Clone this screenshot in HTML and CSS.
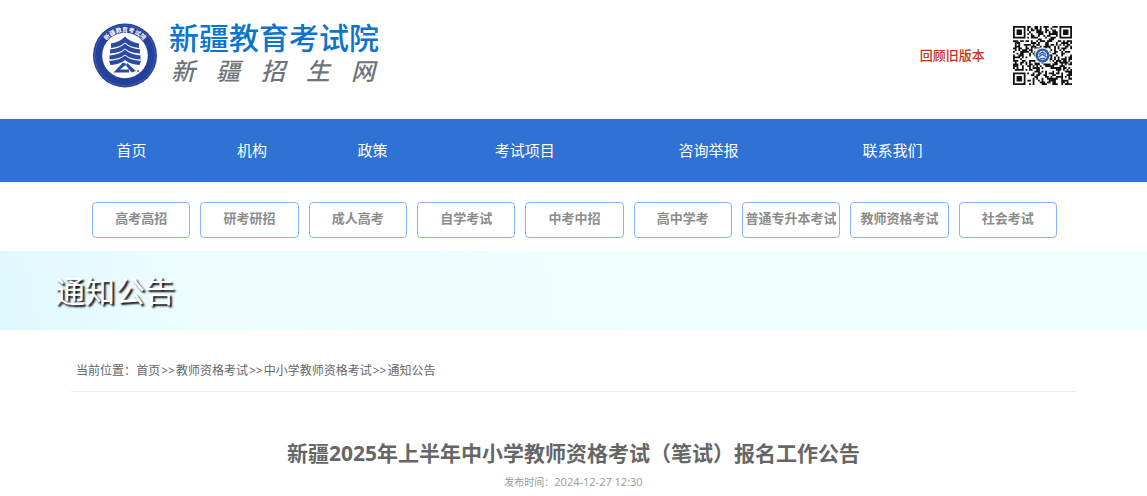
FILE: index.html
```
<!DOCTYPE html>
<html lang="zh-CN">
<head>
    <meta charset="UTF-8">
    <meta name="viewport" content="width=device-width, initial-scale=1.0">
    <title>新疆教育考试院</title>
    <link rel="stylesheet" href="styles.css">
</head>
<body>
    <header class="container header">
        <a class="logo" href="#">
            <svg class="emblem" viewBox="0 0 64 65" aria-hidden="true">
                <circle cx="32" cy="32.5" r="32" fill="#23409a"/>
                <circle cx="32" cy="32.5" r="30.2" fill="none" stroke="#5b72b8" stroke-width=".6"/>
                <circle cx="32" cy="32.5" r="22.8" fill="#fff"/>
                <path id="arc" d="M8.500 27a24.300 24.300 0 0 1 47 0" fill="none"/>
                <text class="emblem-text"><textPath href="#arc" startOffset="50%" text-anchor="middle">新疆教育考试院</textPath></text>
                <g fill="#2c4aa0">
                    <path d="M32 13.500q5 5.500 14 7v4.500q-9-1-14-5.500q-5 4.500-14 5.500v-4.500q9-1.500 14-7z"/>
                    <path d="M32 20.500q5 5 15 6v4q-10-.5-15-5q-5 4.500-15 5v-4q10-1 15-6z"/>
                    <path d="M32 26.500q5 5 15.500 6v4q-10.500-.5-15.500-5q-5 4.500-15.500 5v-4q10.500-1 15.500-6z"/>
                    <path d="M32 32.500q5 4.500 16 5.500l-1.500 4q-9.500-.5-14.500-5q-5 4.500-14.500 5l-1.500-4q11-1 16-5.500z"/>
                    <path d="M30 39.500l4 1.500l-7 5.500h9v3h-15.500z"/>
                    <path d="M34.500 40q4 4.500 8.500 8l-4.500 1.500l-5.500-7z"/>
                    <circle cx="45" cy="48" r=".9"/>
                </g>
            </svg>
            <span class="logo-text">
                <span class="logo-name">新疆教育考试院</span>
                <span class="logo-sub"><span>新</span><span>疆</span><span>招</span><span>生</span><span>网</span></span>
            </span>
        </a>
        <div class="header-right">
            <a class="old-version" href="#">回顾旧版本</a>
            <svg class="qr" viewBox="0 0 33 33" role="img" aria-label="二维码">
                <path id="qrModules" fill="#111"/>
                <rect x="12.500" y="12.500" width="8" height="8" fill="#fff"/>
                <circle cx="16.500" cy="16.500" r="3.900" fill="#2a57a5"/>
                <circle cx="16.500" cy="16.500" r="2.600" fill="#dce6f5"/>
                <path d="M14.500 16l2-1.500l2 1.500M14.300 17.300l2.200-1.500l2.200 1.500M15 18.300h3" fill="none" stroke="#2a57a5" stroke-width=".7"/>
            </svg>
        </div>
    </header>

    <nav class="main-nav">
        <ul class="container main-menu">
            <li><a href="#">首页</a></li>
            <li><a href="#">机构</a></li>
            <li><a href="#">政策</a></li>
            <li class="wide"><a href="#">考试项目</a></li>
            <li class="wide"><a href="#">咨询举报</a></li>
            <li class="wide"><a href="#">联系我们</a></li>
        </ul>
    </nav>

    <nav class="container sub-nav">
        <a href="#">高考高招</a>
        <a href="#">研考研招</a>
        <a href="#">成人高考</a>
        <a href="#">自学考试</a>
        <a href="#">中考中招</a>
        <a href="#">高中学考</a>
        <a href="#">普通专升本考试</a>
        <a href="#">教师资格考试</a>
        <a href="#">社会考试</a>
    </nav>

    <div class="banner">
        <h2>通知公告</h2>
    </div>

    <main class="container">
        <div class="breadcrumb">当前位置：<a href="#">首页</a><span>&gt;&gt;</span><a href="#">教师资格考试</a><span>&gt;&gt;</span><a href="#">中小学教师资格考试</a><span>&gt;&gt;</span><a href="#">通知公告</a></div>
        <article class="article">
            <h1>新疆2025年上半年中小学教师资格考试（笔试）报名工作公告</h1>
            <p class="date">发布时间：<time datetime="2024-12-27T12:30">2024-12-27 12:30</time></p>
        </article>
    </main>

    <script src="qr.js"></script>
</body>
</html>
```
FILE: styles.css
```
* {
    box-sizing: border-box;
}
body {
    margin: 0;
    background-color: #fff;
    color: #666;
    font-family: "Open Sans", "Noto Sans CJK SC", sans-serif;
    font-size: 12px;
}
a {
    color: inherit;
    text-decoration: none;
}
.container {
    width: 87.6%;
    margin: 0 auto;
}

/* header */
.header {
    display: flex;
    justify-content: space-between;
    height: 119px;
    padding: 20px 4px 0 22px;
}
.logo {
    display: flex;
    gap: 12px;
}
.emblem {
    width: 64px;
    height: 65px;
    margin-top: 3px;
}
.emblem-text {
    fill: #fff;
    font-size: 6px;
    font-weight: bold;
}
.logo-text {
    display: flex;
    flex-direction: column;
    font-family: "Liberation Sans", "Noto Sans CJK SC", sans-serif;
    font-weight: 500;
}
.logo-name {
    color: #0a74cf;
    font-size: 30px;
    line-height: 38px;
}
.logo-sub {
    display: flex;
    justify-content: space-between;
    padding: 0 4px 0 2px;
    color: #707478;
    font-size: 24px;
    font-style: italic;
    line-height: 28px;
}
.header-right {
    display: flex;
    align-items: flex-start;
    gap: 28px;
    padding-top: 6px;
}
.old-version {
    color: #c9301c;
    font-size: 13px;
    font-weight: 500;
    line-height: 58px;
}
.qr {
    width: 59px;
    height: 59px;
}

/* navigation */
.main-nav {
    background-color: #2f72d3;
}
.main-menu {
    display: flex;
    padding: 0;
    list-style: none;
}
.main-menu li {
    width: 12%;
    text-align: center;
}
.main-menu .wide {
    width: 18.3%;
}
.main-menu a {
    display: block;
    color: #fff;
    font-size: 15px;
    line-height: 63px;
}
.sub-nav {
    display: grid;
    grid-template-columns: repeat(9, 1fr);
    gap: 10px;
    padding: 20px 19px 13px 21px;
}
.sub-nav a {
    height: 36px;
    border: 1px solid #86b4fb;
    border-radius: 4px;
    color: #8c8c8c;
    font-size: 13px;
    font-weight: bold;
    line-height: 30px;
    text-align: center;
    white-space: nowrap;
}

/* banner */
.banner {
    padding: 0 55px;
    background: linear-gradient(80deg, #def8ff 0, #ebfcff 14%, #effeff 50%, #f0ffff 100%);
}
.banner h2 {
    margin: 0;
    color: #fff;
    font-size: 30px;
    font-weight: normal;
    line-height: 79px;
    text-shadow: 2px 2px 2px #000;
}

/* article */
.breadcrumb {
    margin-top: 20px;
    padding-left: 5px;
    border-bottom: 1px solid #e6eef5;
    line-height: 41px;
}
.breadcrumb span {
    padding: 0 1px;
}
.article {
    text-align: center;
}
.article h1 {
    margin: 46px 0 4px;
    font-size: 21px;
    line-height: 30px;
}
.date {
    margin: 0;
    color: #999;
    font-size: 10px;
    line-height: 20px;
}
.date time {
    font-size: 11px;
}
```
FILE: qr.js
```
const size = 33;
let seed = 20241;

function nextBit() {
    seed = (seed * 1103515245 + 12345) % 2147483648;
    return seed / 2147483648 < 0.52;
}

// finder squares sit in three corners with a blank edge around them
function finder(x, y) {
    const corners = [[0, 0], [size - 7, 0], [0, size - 7]];
    for (const [cx, cy] of corners) {
        const d = Math.max(Math.abs(x - cx - 3), Math.abs(y - cy - 3));
        if (d <= 4) {
            return d !== 2 && d !== 4;
        }
    }
    return null;
}

let path = '';
for (let y = 0; y < size; y++) {
    for (let x = 0; x < size; x++) {
        const bit = nextBit();
        const mark = finder(x, y);
        if (mark === null ? bit : mark) {
            path += `M${x} ${y}h1v1h-1z`;
        }
    }
}
document.getElementById('qrModules').setAttribute('d', path);
```
